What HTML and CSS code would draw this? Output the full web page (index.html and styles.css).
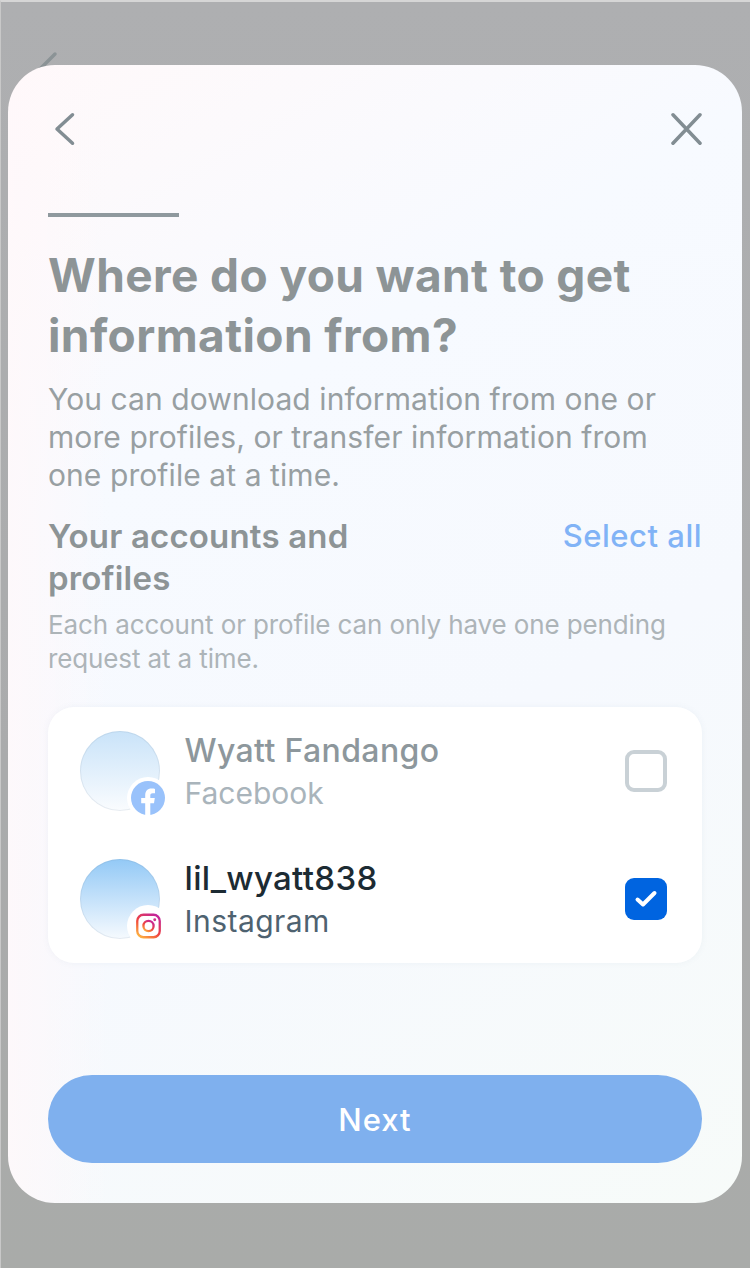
FILE: index.html
```html
<!DOCTYPE html>
<html lang="en">
<head>
<meta charset="utf-8">
<title>Where do you want to get information from?</title>
<link rel="stylesheet" href="styles.css">
</head>
<body>
<div class="backdrop">
  <svg class="behind-chevron" width="24" height="36" viewBox="0 0 24 36"><path d="M21 3 L6 18 L21 33" fill="none" stroke="#8b9396" stroke-width="3.500" stroke-linecap="round" stroke-linejoin="round"/></svg>
  <main class="modal">
    <header class="topbar">
      <svg class="icon" width="24" height="36" viewBox="0 0 24 36"><path d="M20.500 3.800 L5 18 L20.500 32.200" fill="none" stroke="#828d93" stroke-width="3.500" stroke-linecap="round" stroke-linejoin="round"/></svg>
      <svg class="icon" width="36" height="36" viewBox="0 0 36 36"><path d="M7 3.800 L34 32.200 M34 3.800 L7 32.200" fill="none" stroke="#828d93" stroke-width="3.500" stroke-linecap="round"/></svg>
    </header>
    <div class="progress"></div>
    <h1 class="title">Where do you want to get information from?</h1>
    <p class="lead">You can download information from one or more profiles, or transfer information from one profile at a time.</p>
    <div class="section-head">
      <h2 class="section-title">Your accounts and profiles</h2>
      <a class="select-all">Select all</a>
    </div>
    <p class="note">Each account or profile can only have one pending request at a time.</p>
    <section class="card">
      <div class="row">
        <div class="avatar avatar-dim">
          <span class="badge">
            <svg width="34" height="34" viewBox="0 0 34 34"><circle cx="17" cy="17" r="17" fill="#99c2fb"/><path d="M14.200 34 V22.300 H10.200 V17 H14.200 V14.500 C14.200 9.800 16.600 7.500 20.400 7.500 C22 7.500 23.300 7.700 24 7.900 V12.300 H21.700 C19.700 12.300 19.300 13.300 19.300 15 V17 H23.800 L23 22.300 H19.300 V34 Z" fill="#fff"/></svg>
          </span>
        </div>
        <div class="names">
          <div class="name name-dim name-fb">Wyatt Fandango</div>
          <div class="network network-dim">Facebook</div>
        </div>
        <span class="check check-off"></span>
      </div>
      <div class="row">
        <div class="avatar avatar-full">
          <span class="badge">
            <svg width="25" height="26" viewBox="0 0 26 26">
              <defs><linearGradient id="ig" x1="0.150" y1="1" x2="0.850" y2="0"><stop offset="0" stop-color="#fdb040"/><stop offset="0.45" stop-color="#f0443f"/><stop offset="1" stop-color="#c2259c"/></linearGradient></defs>
              <rect x="1.300" y="1.300" width="23.400" height="23.400" rx="6.500" fill="none" stroke="url(#ig)" stroke-width="2.400"/>
              <circle cx="13" cy="13" r="5.300" fill="none" stroke="url(#ig)" stroke-width="2.400"/>
              <circle cx="19.500" cy="6.500" r="1.500" fill="#d1308a"/>
            </svg>
          </span>
        </div>
        <div class="names">
          <div class="name name-ig">lil_wyatt838</div>
          <div class="network network-ig">Instagram</div>
        </div>
        <span class="check check-on">
          <svg width="24" height="20" viewBox="0 0 24 20"><path d="M3.500 10.500 L9 15.500 L20.500 4" fill="none" stroke="#fff" stroke-width="4" stroke-linecap="round" stroke-linejoin="round"/></svg>
        </span>
      </div>
    </section>
    <button class="next" type="button">Next</button>
  </main>
</div>
</body>
</html>
```
FILE: styles.css
```css
* { box-sizing: border-box; }
html, body { margin: 0; padding: 0; }
body {
  width: 750px;
  height: 1268px;
  overflow: hidden;
  font-family: Inter, "Noto Sans", sans-serif;
}
.backdrop {
  position: relative;
  height: 1268px;
  padding: 63px 8px 0 7px;
  background: linear-gradient(180deg, #aeafb1 0%, #aaabac 60%, #a9aba9 100%);
  border-top: 2px solid #d6d6d6;
  border-left: 1px solid #c8c8c8;
}
.behind-chevron {
  position: absolute;
  left: 33px;
  top: 49px;
}
.modal {
  position: relative;
  width: 734px;
  height: 1138px;
  padding: 46px 40px 40px;
  border-radius: 47px;
  background:
    linear-gradient(90deg, rgba(255, 248, 250, 0.8) 0%, rgba(255, 248, 250, 0) 14%),
    linear-gradient(150deg, #fff9fa 0%, #f7faff 30%, #f6f9fe 60%, #f7fbf9 100%);
  display: flex;
  flex-direction: column;
}
.topbar {
  display: flex;
  justify-content: space-between;
  align-items: center;
  height: 36px;
  padding-left: 4px;
}
.icon { display: block; }
.progress {
  width: 131px;
  height: 4px;
  margin-top: 66px;
  background: #8f999e;
}
.title {
  margin: 28px 0 0;
  font-size: 46px;
  line-height: 60px;
  font-weight: 700;
  color: #8d9496;
  letter-spacing: 0.4px;
}
.lead {
  margin: 15px 0 0;
  font-size: 30px;
  line-height: 38px;
  color: #989fa2;
  font-weight: 400;
  letter-spacing: 0.08px;
}
.section-head {
  margin-top: 21px;
  display: flex;
  justify-content: space-between;
  align-items: flex-start;
}
.section-title {
  margin: 0;
  width: 340px;
  font-size: 33px;
  line-height: 42px;
  font-weight: 600;
  color: #8d9496;
  letter-spacing: 0.18px;
}
.select-all {
  font-size: 31px;
  line-height: 42px;
  font-weight: 500;
  color: #81b3f6;
  letter-spacing: 0.5px;
}
.note {
  margin: 9px 0 0;
  font-size: 26px;
  line-height: 34px;
  color: #adb4b8;
  letter-spacing: -0.12px;
}
.card {
  margin-top: 31px;
  height: 256px;
  padding: 0 35px 0 32px;
  background: #fff;
  border-radius: 26px;
  box-shadow: 0 0 6px rgba(120, 140, 170, 0.08);
  display: flex;
  flex-direction: column;
}
.row {
  height: 128px;
  display: flex;
  align-items: center;
}
.avatar {
  position: relative;
  width: 80px;
  height: 80px;
  flex: none;
  border-radius: 50%;
  box-shadow: inset 0 0 0 1px rgba(120, 140, 160, 0.14);
}
.avatar-dim { background: linear-gradient(180deg, #c9e3f9 0%, #fafcfe 100%); }
.avatar-full { background: linear-gradient(180deg, #93c9f6 0%, #f6fafe 100%); }
.badge {
  position: absolute;
  left: 47px;
  top: 46px;
  width: 42px;
  height: 42px;
  border-radius: 50%;
  background: #fff;
  display: flex;
  align-items: center;
  justify-content: center;
}
.badge svg { display: block; }
.names {
  flex: 1;
  margin-left: 24.500px;
  padding-top: 2px;
}
.name {
  font-size: 32px;
  line-height: 43px;
  font-weight: 500;
  color: #1c2b33;
}
.name-fb { letter-spacing: 0.36px; }
.name-ig { letter-spacing: 0.33px; font-size: 33px; }
.name-dim { color: #8d979c; }
.network {
  font-size: 30px;
  line-height: 43px;
  color: #4e6270;
}
.network-ig { letter-spacing: 0.45px; }
.network-dim { color: #a9b4bb; }
.check {
  width: 42px;
  height: 42px;
  flex: none;
  border-radius: 9px;
  display: flex;
  align-items: center;
  justify-content: center;
}
.check-off { border: 4px solid #c9d1d6; }
.check-on { background: #0064e0; }
.next {
  margin-top: auto;
  width: 654px;
  height: 88px;
  border: 0;
  border-radius: 44px;
  background: #7fb0ee;
  color: #fff;
  font-family: Inter, "Noto Sans", sans-serif;
  font-size: 31px;
  font-weight: 500;
  letter-spacing: 1px;
}
```
